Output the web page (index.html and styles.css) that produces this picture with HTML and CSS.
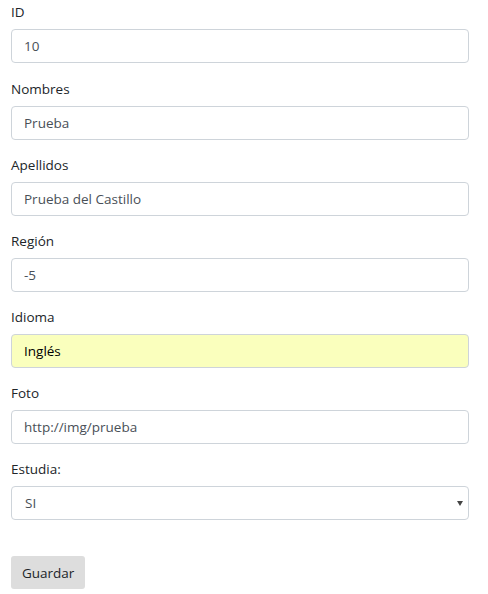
FILE: index.html
```html
<!DOCTYPE html>
<html>
<head>
<meta charset="utf-8">
<link rel="stylesheet" href="styles.css">
</head>
<body>
<form class="form">
  <div class="group">
    <label class="label">ID</label>
    <input class="control" type="text" value="10">
  </div>
  <div class="group">
    <label class="label">Nombres</label>
    <input class="control" type="text" value="Prueba">
  </div>
  <div class="group">
    <label class="label">Apellidos</label>
    <input class="control" type="text" value="Prueba del Castillo">
  </div>
  <div class="group">
    <label class="label">Región</label>
    <input class="control" type="text" value="-5">
  </div>
  <div class="group">
    <label class="label">Idioma</label>
    <input class="control autofill" type="text" value="Inglés">
  </div>
  <div class="group">
    <label class="label">Foto</label>
    <input class="control" type="text" value="http://img/prueba">
  </div>
  <div class="group">
    <label class="label">Estudia:</label>
    <div class="select-wrap">
      <select class="control select">
        <option>SI</option>
        <option>NO</option>
      </select>
      <span class="arrow"></span>
    </div>
  </div>
  <div class="actions">
    <button class="btn" type="button">Guardar</button>
  </div>
</form>
</body>
</html>
```
FILE: styles.css
```css
* { box-sizing: border-box; }
html, body { margin: 0; padding: 0; background: #fff; }
body {
  font-family: "Open Sans", "Noto Sans", "Liberation Sans", sans-serif;
  font-size: 13.5px;
  line-height: 21px;
  color: #212529;
}
.form {
  padding: 2px 19px 0 11px;
  display: flex;
  flex-direction: column;
}
.group {
  display: flex;
  flex-direction: column;
  margin-bottom: 15px;
}
.group:first-child { margin-bottom: 16px; }
.label {
  display: block;
  height: 21px;
  margin-bottom: 6px;
}
.control {
  display: block;
  width: 100%;
  height: 34px;
  padding: 6px 12px;
  font-family: inherit;
  font-size: 13.5px;
  line-height: 20px;
  color: #495057;
  background: #fff;
  border: 1px solid #ced4da;
  border-radius: 4px;
  outline: none;
}
.autofill {
  background: #faffbd;
  color: #000;
}
.select-wrap { position: relative; }
.select {
  -webkit-appearance: none;
  appearance: none;
  padding-left: 13px;
}
.arrow {
  position: absolute;
  right: 6px;
  top: 15px;
  width: 0;
  height: 0;
  border-left: 3px solid transparent;
  border-right: 3px solid transparent;
  border-top: 5px solid #444;
  pointer-events: none;
}
.actions { padding-top: 21px; }
.btn {
  height: 33px;
  padding: 0 11px;
  font-family: inherit;
  font-size: 13.5px;
  color: #212529;
  background: #dddddd;
  border: none;
  border-radius: 3px;
}
```
